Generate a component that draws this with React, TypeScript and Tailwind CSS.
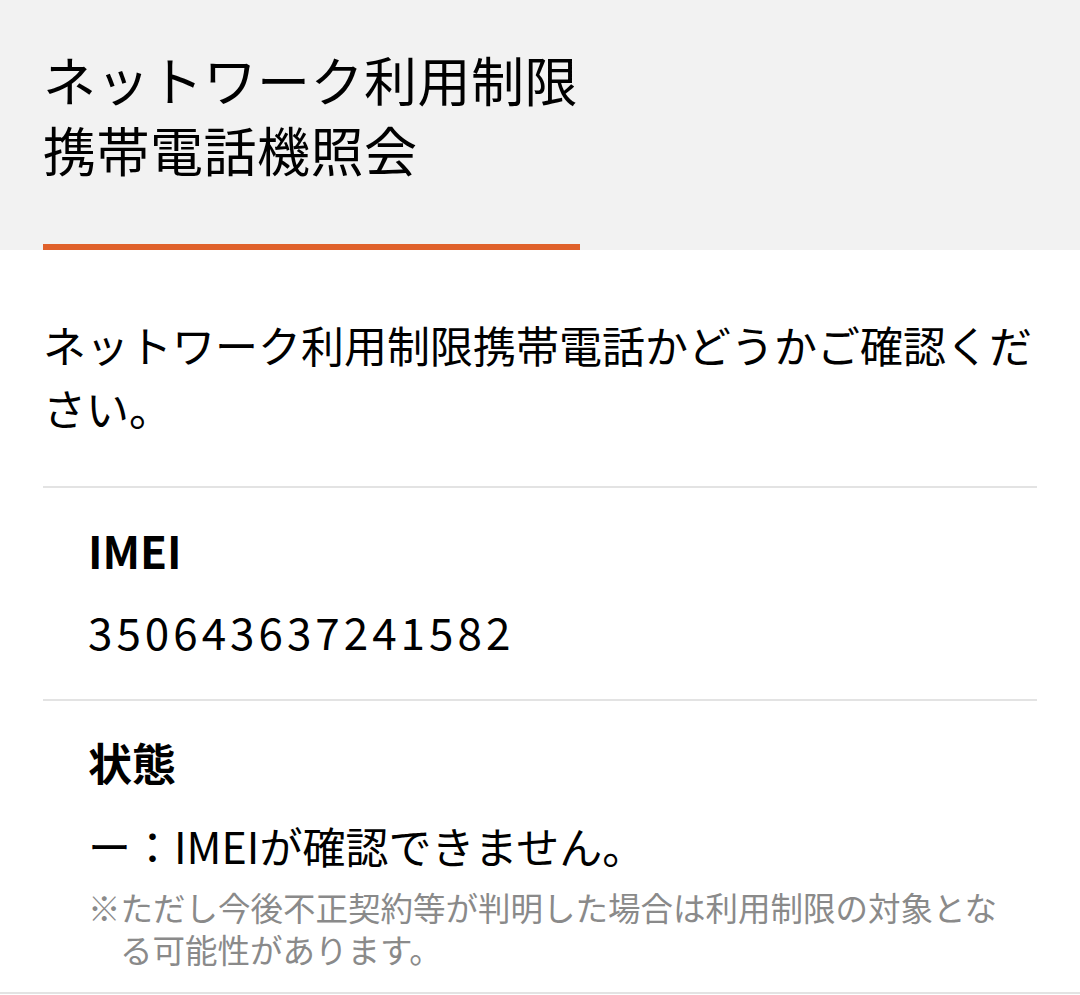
import React from 'react';

const jp = "font-['Noto_Sans_CJK_JP','Noto_Sans',sans-serif]";

export default function App() {
  return (
    <div className={`min-h-screen bg-white text-black ${jp}`}>
      {/* Header */}
      <header className="bg-[#f2f2f2] h-[250px] flex flex-col">
        <h1 className="pl-[43px] pt-[44px] text-[53px] leading-[70px] font-normal tracking-[0.5px]">
          ネットワーク利用制限
          <br />
          携帯電話機照会
        </h1>
        <div className="mt-auto ml-[43px] w-[537px] h-[6px] bg-[#e0612b]" />
      </header>

      <main>
        {/* Intro */}
        <p className="px-[43px] pt-[63px] pb-[47px] text-[43px] leading-[63px]">
          ネットワーク利用制限携帯電話かどうかご確認ください。
        </p>

        <div className="mx-[43px] h-[2px] bg-[#e3e3e3]" />

        {/* IMEI */}
        <section className="px-[88px] pt-[32px] pb-[38px]">
          <div className="text-[44px] leading-[60px] font-bold">IMEI</div>
          <div className="mt-[21px] text-[44px] leading-[60px] tracking-[4px]">350643637241582</div>
        </section>

        <div className="mx-[43px] h-[2px] bg-[#e3e3e3]" />

        {/* 状態 */}
        <section className="pl-[88px] pr-[70px] pt-[31px] pb-[22px]">
          <div className="text-[44px] leading-[60px] font-bold">状態</div>
          <div className="mt-[23px] text-[43px] leading-[60px]">ー：IMEIが確認できません。</div>
          <p className="mt-[11px] pl-[32px] -indent-[32px] text-[32.5px] leading-[42px] text-[#8a8a8a]">
            ※ただし今後不正契約等が判明した場合は利用制限の対象となる可能性があります。
          </p>
        </section>

        <div className="h-[2px] bg-[#e3e3e3]" />
      </main>
    </div>
  );
}
